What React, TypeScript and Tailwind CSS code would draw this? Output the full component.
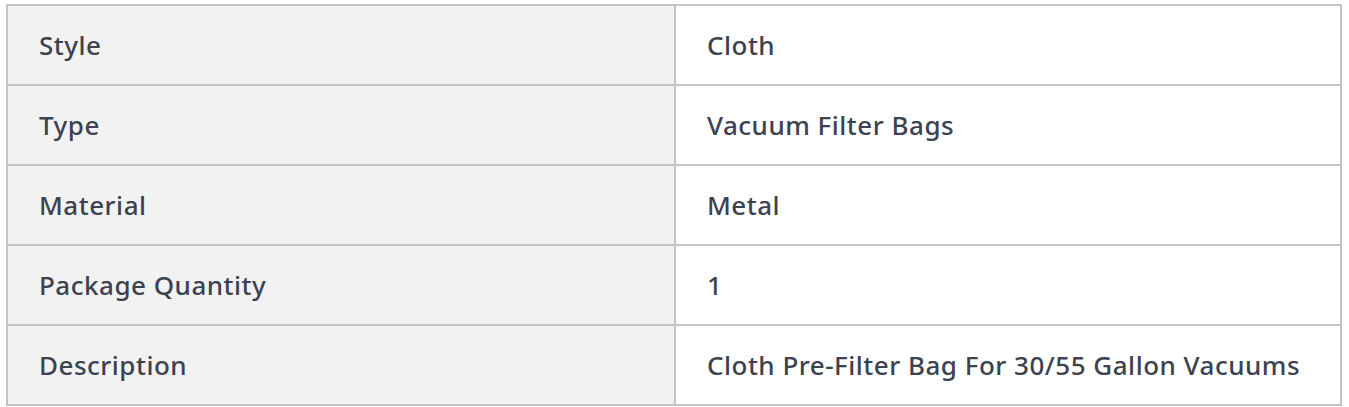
const rows: [string, string][] = [
    ['Style', 'Cloth'],
    ['Type', 'Vacuum Filter Bags'],
    ['Material', 'Metal'],
    ['Package Quantity', '1'],
    ['Description', 'Cloth Pre-Filter Bag For 30/55 Gallon Vacuums'],
];

const App = () => {
    return (
        <div className="bg-white min-h-screen pl-[6px] pt-[4px] font-['Noto_Sans',sans-serif]">
            <table className="w-[1336px] border-collapse border-2 border-[#c4c4c4] text-[26px] leading-none tracking-[0.5px] font-medium text-[#3c4250]">
                <tbody>
                    {rows.map(([label, value]) => (
                        <tr key={label} className="h-[80px]">
                            <td className="w-[668px] border-2 border-[#c4c4c4] bg-[#f2f2f2] px-[31px] align-middle">{label}</td>
                            <td className="border-2 border-[#c4c4c4] bg-white px-[31px] align-middle">{value}</td>
                        </tr>
                    ))}
                </tbody>
            </table>
        </div>
    );
};

export default App;
